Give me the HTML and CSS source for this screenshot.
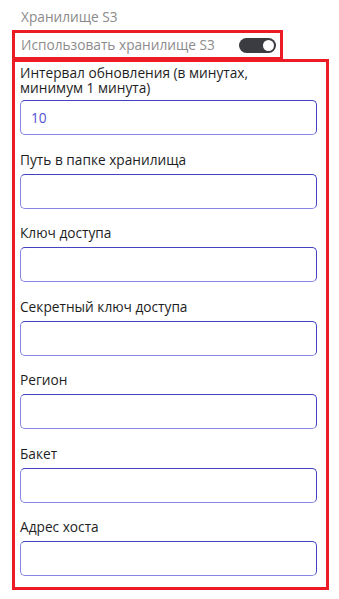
FILE: index.html
```html
<!DOCTYPE html>
<html lang="ru">
<head>
<meta charset="utf-8">
<link rel="stylesheet" href="styles.css">
</head>
<body>
<div class="page">
  <div class="title">Хранилище S3</div>
  <div class="switch-row">
    <span class="switch-label">Использовать хранилище S3</span>
    <span class="toggle"><span class="knob"></span></span>
  </div>
  <div class="fields">
    <div class="field">
      <label class="label label-wrap">Интервал обновления (в минутах,<br>минимум 1 минута)</label>
      <div class="input"><span class="value">10</span></div>
    </div>
    <div class="field">
      <label class="label">Путь в папке хранилища</label>
      <div class="input"></div>
    </div>
    <div class="field">
      <label class="label">Ключ доступа</label>
      <div class="input"></div>
    </div>
    <div class="field">
      <label class="label">Секретный ключ доступа</label>
      <div class="input"></div>
    </div>
    <div class="field">
      <label class="label">Регион</label>
      <div class="input"></div>
    </div>
    <div class="field">
      <label class="label">Бакет</label>
      <div class="input"></div>
    </div>
    <div class="field">
      <label class="label">Адрес хоста</label>
      <div class="input"></div>
    </div>
  </div>
</div>
</body>
</html>
```

FILE: styles.css
```css
html, body {
  margin: 0;
  padding: 0;
  background: #ffffff;
}
body {
  font-family: "Open Sans", "Noto Sans", sans-serif;
  font-size: 13.7px;
  line-height: 14px;
  color: #202020;
}
.page {
  padding: 10px 0 0 12px;
  width: 317px;
}
.title {
  padding-left: 9px;
  color: #8a8a8a;
  height: 14px;
  margin-bottom: 6px;
}
.switch-row {
  width: 255px;
  height: 24px;
  border: 3px solid #ec1c24;
  padding: 0 4px 0 6px;
  display: flex;
  align-items: center;
  justify-content: space-between;
}
.switch-label {
  color: #8c8c8c;
}
.toggle {
  width: 37px;
  height: 15px;
  border-radius: 8px;
  background: #3b3c42;
  display: flex;
  align-items: center;
  justify-content: flex-end;
  padding-right: 2px;
  box-sizing: border-box;
}
.knob {
  width: 11px;
  height: 11px;
  border-radius: 50%;
  background: #ffffff;
}
.fields {
  margin-top: -1px;
  border: 3px solid #ec1c24;
  padding: 3px 9px 11px 5px;
  display: flex;
  flex-direction: column;
  gap: 17.5px;
}
.field {
  display: flex;
  flex-direction: column;
}
.label {
  line-height: 14px;
  margin-bottom: 7px;
  color: #1e1e1e;
}
.label-wrap {
  line-height: 15px;
  margin-bottom: 5px;
}
.input {
  height: 33px;
  border: 1px solid;
  border-color: #4343c2 #4343c2 #8686e2 #8686e2;
  border-radius: 5px;
  display: flex;
  align-items: center;
  padding-left: 10px;
}
.value {
  color: #5252d2;
}
```
